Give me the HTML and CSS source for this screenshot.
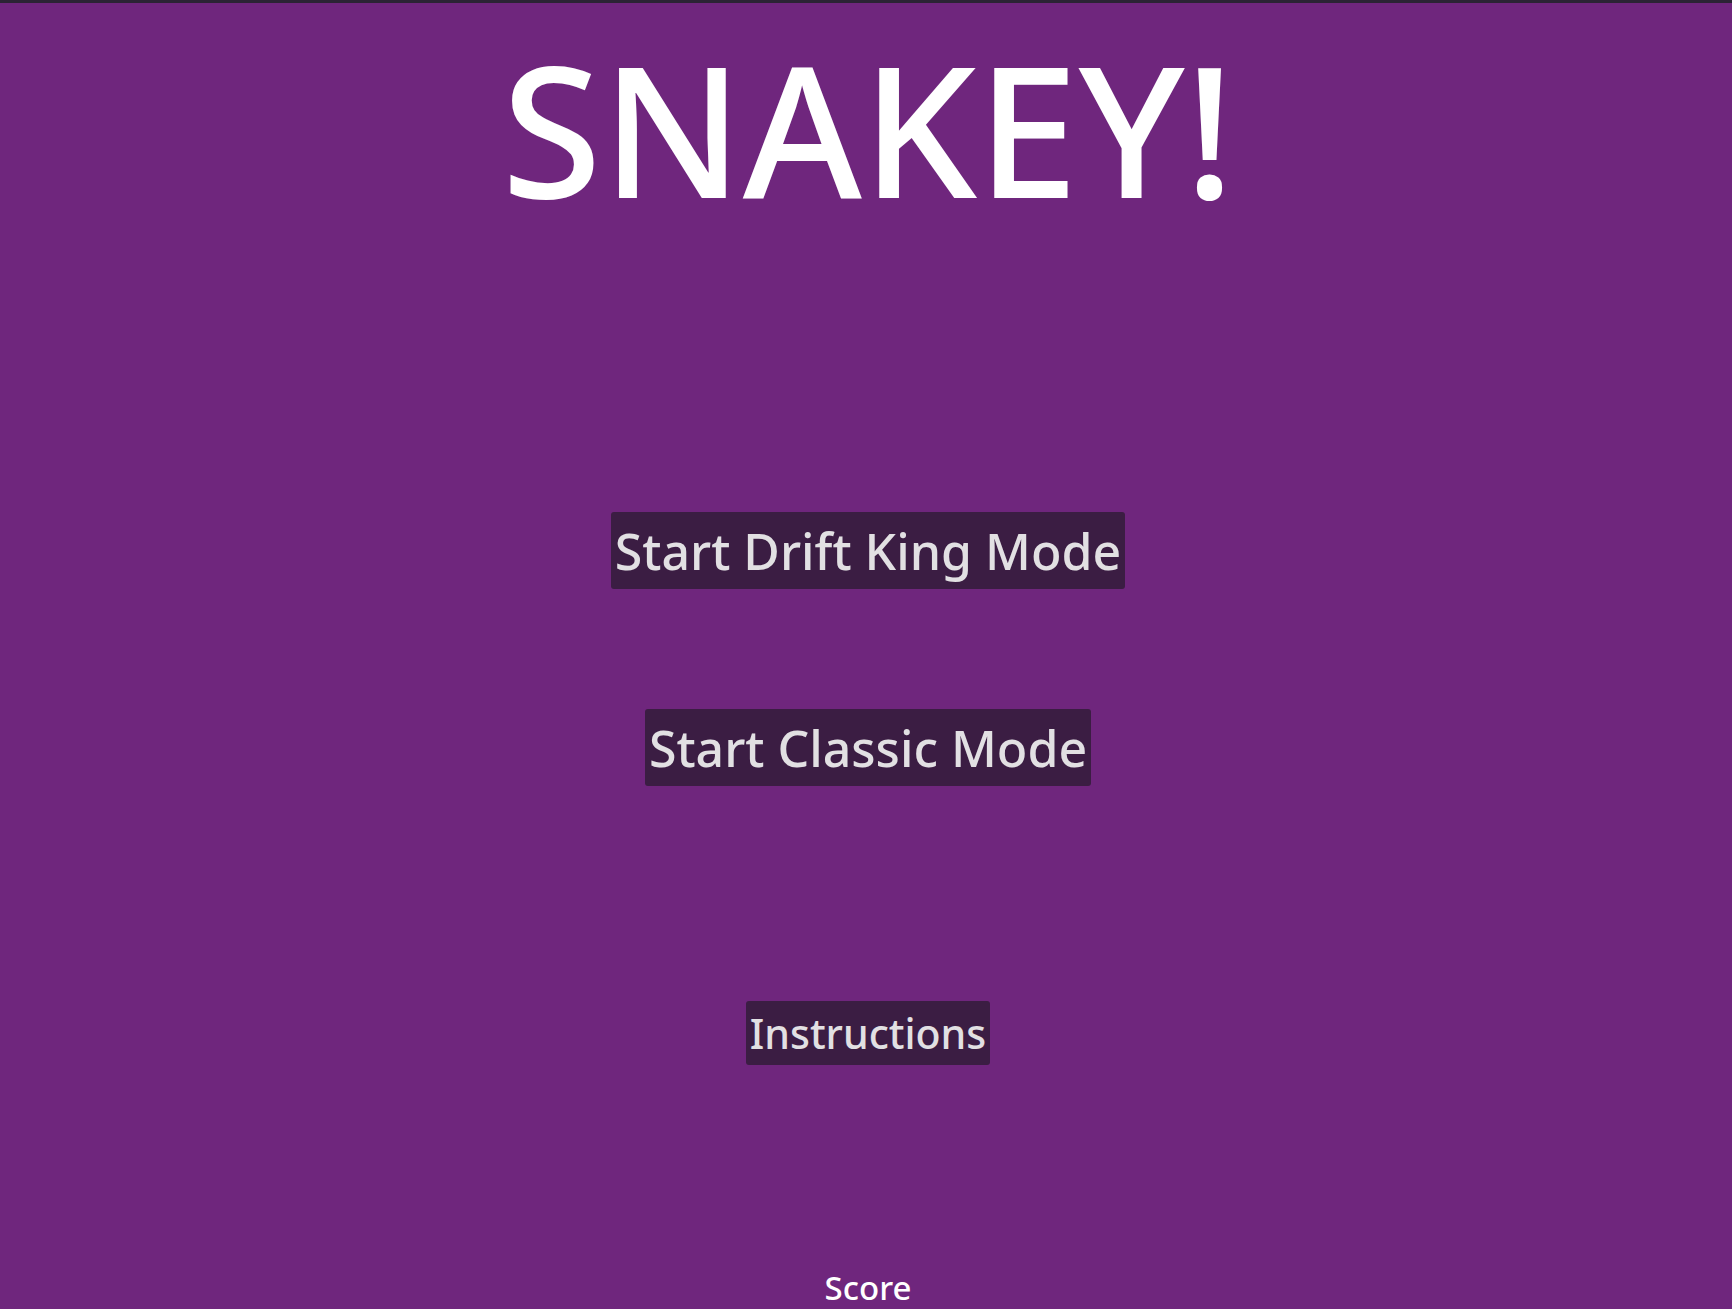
FILE: index.html
```html
<!DOCTYPE html>
<html lang="en">
<head>
<meta charset="utf-8">
<title>SNAKEY!</title>
<link rel="stylesheet" href="styles.css">
</head>
<body>
<main class="menu">
  <h1 class="title">SNAKEY!</h1>
  <button class="btn btn-drift" type="button">Start Drift King Mode</button>
  <button class="btn btn-classic" type="button">Start Classic Mode</button>
  <button class="btn btn-instructions" type="button">Instructions</button>
  <div class="score">Score</div>
</main>
</body>
</html>
```
FILE: styles.css
```css
html, body {
  margin: 0;
  padding: 0;
  height: 100%;
}
body {
  background: #6f267d;
  border-top: 3px solid #2b2334;
  box-sizing: border-box;
  overflow: hidden;
  font-family: "Noto Sans", "Open Sans", sans-serif;
}
.menu {
  display: flex;
  flex-direction: column;
  align-items: center;
  padding-left: 4px;
}
.title {
  margin: 33px 0 0;
  font-size: 182px;
  line-height: 182px;
  font-weight: 500;
  color: #ffffff;
}
.btn {
  font-family: "Noto Sans", "Open Sans", sans-serif;
  background: #3b1d43;
  color: #e2e0e3;
  border: none;
  border-radius: 3px;
  font-size: 50px;
  font-weight: 500;
  line-height: 68px;
  padding: 5px 4px 4px;
  cursor: pointer;
}
.btn-drift {
  margin-top: 294px;
}
.btn-classic {
  margin-top: 120px;
}
.btn-instructions {
  margin-top: 215px;
  font-size: 41px;
  line-height: 56px;
  padding: 4px 4px;
}
.score {
  margin-top: 200px;
  font-size: 33px;
  font-weight: 500;
  line-height: 45px;
  color: #ffffff;
}
```
